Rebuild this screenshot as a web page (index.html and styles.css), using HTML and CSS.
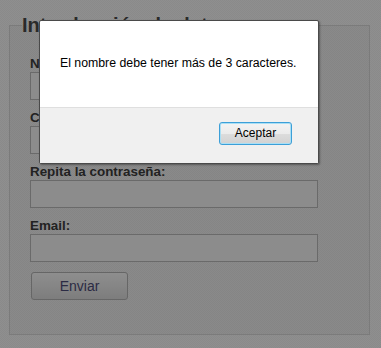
FILE: index.html
```html
<!DOCTYPE html>
<html lang="es">
<head>
<meta charset="utf-8">
<title>Formulario</title>
<link rel="stylesheet" href="styles.css">
</head>
<body>
<div class="page">
  <form class="form">
    <fieldset class="box">
      <legend class="legend">Introducción de datos</legend>
      <label class="label">Nombre:</label>
      <div class="input"></div>
      <label class="label">Contraseña:</label>
      <div class="input"></div>
      <label class="label">Repita la contraseña:</label>
      <div class="input"></div>
      <label class="label">Email:</label>
      <div class="input"></div>
      <div class="submit">Enviar</div>
    </fieldset>
  </form>
</div>
<div class="dialog">
  <div class="dialog-body">El nombre debe tener más de 3 caracteres.</div>
  <div class="dialog-foot"><div class="btn-ok">Aceptar</div></div>
</div>
</body>
</html>
```
FILE: styles.css
```css
html, body {
  margin: 0;
  padding: 0;
}
body {
  width: 381px;
  height: 348px;
  overflow: hidden;
  font-family: "Liberation Sans", Arial, sans-serif;
  background-color: #8d8d8d;
  background-image: repeating-conic-gradient(#8f8f8f 0 25%, #8a8a8a 0 50%);
  background-size: 2px 2px;
}
.page {
  padding: 14px 11px 0 9px;
}
.form {
  margin: 0;
}
.box {
  margin: 0;
  width: 361px;
  box-sizing: border-box;
  border: 1px solid #7b7b7b;
  background: rgba(0, 0, 0, 0.03);
  padding: 19px 20px 33px 20px;
  height: 321px;
}
.legend {
  margin-left: -8px;
  padding: 0;
  font-size: 20px;
  line-height: 23px;
  font-weight: bold;
  color: #2a2a2a;
}
.label {
  display: block;
  font-size: 13.4px;
  line-height: 15px;
  font-weight: bold;
  color: #222;
  margin-bottom: 1px;
}
.input {
  width: 288px;
  height: 28px;
  box-sizing: border-box;
  border: 1px solid #6a6a6a;
  background: #8c8c8c;
  margin-bottom: 10px;
}
.submit {
  margin-top: 1px;
  margin-left: 1px;
  width: 97px;
  height: 28px;
  box-sizing: border-box;
  border: 1px solid #666;
  border-radius: 3px;
  background: linear-gradient(#8e8e8e, #7d7d7d);
  font-size: 14px;
  line-height: 26px;
  text-align: center;
  color: #2b2b44;
}
.dialog {
  position: absolute;
  left: 39px;
  top: 20px;
  width: 280px;
  height: 144px;
  box-sizing: border-box;
  border: 1px solid #4a4a4a;
  border-radius: 2px;
  background: #fff;
  box-shadow: 1px 1px 2px rgba(0, 0, 0, 0.35);
  display: flex;
  flex-direction: column;
}
.dialog-body {
  height: 86px;
  box-sizing: border-box;
  padding: 35px 0 0 20px;
  font-size: 12.3px;
  line-height: 15px;
  color: #000;
}
.dialog-foot {
  flex: 1;
  background: #f0f0f0;
  border-top: 1px solid #dfdfdf;
  display: flex;
  justify-content: flex-end;
  align-items: flex-start;
  padding: 14px 26px 0 0;
}
.btn-ok {
  width: 73px;
  height: 23px;
  box-sizing: border-box;
  border: 1px solid #3c9fd8;
  border-radius: 3px;
  background: linear-gradient(#f3f3f3 0%, #ebebeb 50%, #dcdcdc 51%, #d2d2d2 100%);
  box-shadow: inset 0 0 0 1px #a9dff5;
  font-size: 12px;
  line-height: 21px;
  text-align: center;
  color: #000;
}
```
